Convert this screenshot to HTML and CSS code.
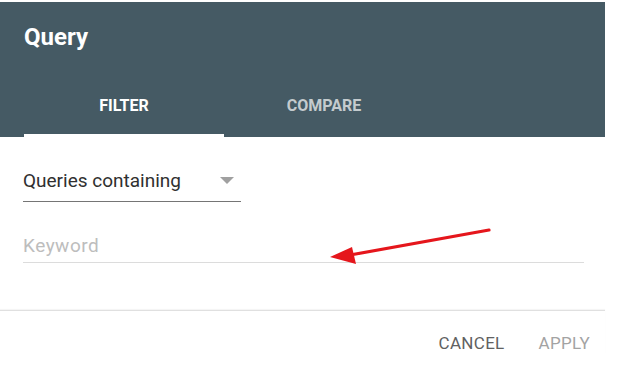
FILE: index.html
```html
<!DOCTYPE html>
<html lang="en">
<head>
  <meta charset="UTF-8" />
  <title>Query</title>
  <link rel="stylesheet" href="styles.css">
</head>
<body>

  <div class="dialog">

    <div class="header">
      <div class="title">Query</div>
      <div class="tabs">
        <div class="tab active">Filter</div>
        <div class="tab">Compare</div>
      </div>
    </div>

    <div class="content">
      <div class="select">
        <span>Queries containing</span>
        <span class="caret"></span>
      </div>
      <div class="input">Keyword</div>
    </div>

    <div class="actions">
      <button class="btn cancel">Cancel</button>
      <button class="btn apply">Apply</button>
    </div>

    <svg class="arrow" width="620" height="373" viewBox="0 0 620 373">
      <line x1="489" y1="230" x2="350" y2="255" stroke="#e5161c" stroke-width="3.2" stroke-linecap="round" />
      <polygon points="330,257 352,247 356,264" fill="#e5161c" />
    </svg>

  </div>

</body>
</html>
```

FILE: styles.css
```css
body {
  margin: 0;
  padding: 0;
  background-color: #ffffff;
  font-family: Roboto, "Liberation Sans", sans-serif;
}

.dialog {
  position: relative;
  width: 605px;
  margin-top: 2px;
}

.header {
  background-color: #455a64;
  color: white;
  padding: 19px 24px 0 24px;
}

.title {
  font-size: 24px;
  font-weight: bold;
  line-height: 32px;
}

.tabs {
  display: flex;
  margin-top: 23px;
}

.tab {
  width: 200px;
  height: 56px;
  padding-top: 2px;
  line-height: 56px;
  text-align: center;
  font-size: 16px;
  font-weight: bold;
  text-transform: uppercase;
  color: rgba(255, 255, 255, 0.7);
  border-bottom: 3px solid transparent;
}

.tab.active {
  color: white;
  border-bottom-color: #ffffff;
}

.content {
  padding: 23px 21px 47px 23px;
}

.select {
  width: 218px;
  display: flex;
  justify-content: space-between;
  align-items: center;
  height: 40px;
  padding-bottom: 1px;
  font-size: 19px;
  color: #303030;
  border-bottom: 1px solid #757575;
}

.caret {
  width: 0;
  height: 0;
  margin-right: 7px;
  border-left: 7px solid transparent;
  border-right: 7px solid transparent;
  border-top: 7px solid #a0a0a0;
}

.input {
  margin-top: 24px;
  height: 36px;
  line-height: 40px;
  font-size: 19px;
  letter-spacing: 0.5px;
  color: #bdbdbd;
  border-bottom: 1px solid #dcdcdc;
}

.actions {
  display: flex;
  justify-content: flex-end;
  gap: 34px;
  padding: 21px 15px 0 0;
  border-top: 1px solid #e0e0e0;
  box-shadow: 0 -1px 1px rgba(0, 0, 0, 0.04);
}

.btn {
  border: none;
  background: none;
  padding: 0;
  font-family: Roboto, "Liberation Sans", sans-serif;
  font-size: 17px;
  letter-spacing: 0.3px;
  text-transform: uppercase;
  line-height: 22px;
}

.cancel {
  color: #616161;
}

.apply {
  color: #a3a3a3;
}

.arrow {
  position: absolute;
  left: 0;
  top: -2px;
  pointer-events: none;
}
```
